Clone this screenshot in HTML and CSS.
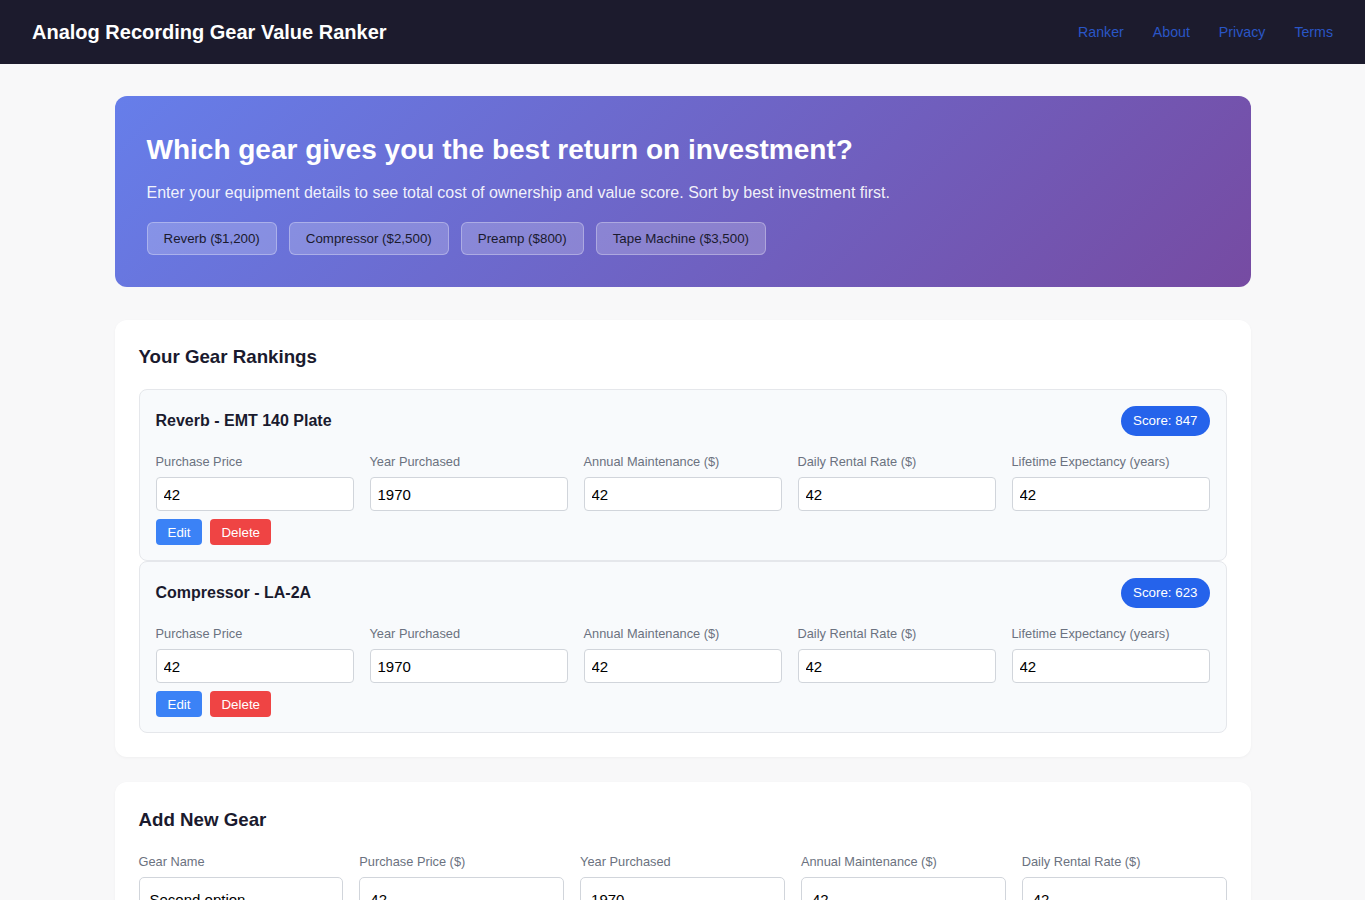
FILE: index.html
```html
<!DOCTYPE html>
<html lang="en">
<head>
    <meta charset="UTF-8">
    <title>Analog Recording Gear Value Ranker</title>
    <link rel="stylesheet" href="styles.css">
</head>
<body>
<header class="topbar">
    <h1 class="brand">Analog Recording Gear Value Ranker</h1>
    <nav class="nav">
        <a href="#">Ranker</a>
        <a href="#">About</a>
        <a href="#">Privacy</a>
        <a href="#">Terms</a>
    </nav>
</header>

<main class="container">
    <!-- hero -->
    <section class="hero">
        <h2>Which gear gives you the best return on investment?</h2>
        <p>Enter your equipment details to see total cost of ownership and value score. Sort by best investment first.</p>
        <div class="presets">
            <button class="preset">Reverb ($1,200)</button>
            <button class="preset">Compressor ($2,500)</button>
            <button class="preset">Preamp ($800)</button>
            <button class="preset">Tape Machine ($3,500)</button>
        </div>
    </section>

    <!-- rankings -->
    <section class="card">
        <h3>Your Gear Rankings</h3>
        <div class="item">
            <div class="item-head">
                <h4>Reverb - EMT 140 Plate</h4>
                <span class="score">Score: 847</span>
            </div>
            <div class="fields">
                <label class="field"><span>Purchase Price</span><input type="text" value="42"></label>
                <label class="field"><span>Year Purchased</span><input type="text" value="1970"></label>
                <label class="field"><span>Annual Maintenance ($)</span><input type="text" value="42"></label>
                <label class="field"><span>Daily Rental Rate ($)</span><input type="text" value="42"></label>
                <label class="field"><span>Lifetime Expectancy (years)</span><input type="text" value="42"></label>
            </div>
            <div class="actions">
                <button class="btn btn-edit">Edit</button>
                <button class="btn btn-delete">Delete</button>
            </div>
        </div>
        <div class="item">
            <div class="item-head">
                <h4>Compressor - LA-2A</h4>
                <span class="score">Score: 623</span>
            </div>
            <div class="fields">
                <label class="field"><span>Purchase Price</span><input type="text" value="42"></label>
                <label class="field"><span>Year Purchased</span><input type="text" value="1970"></label>
                <label class="field"><span>Annual Maintenance ($)</span><input type="text" value="42"></label>
                <label class="field"><span>Daily Rental Rate ($)</span><input type="text" value="42"></label>
                <label class="field"><span>Lifetime Expectancy (years)</span><input type="text" value="42"></label>
            </div>
            <div class="actions">
                <button class="btn btn-edit">Edit</button>
                <button class="btn btn-delete">Delete</button>
            </div>
        </div>
    </section>

    <!-- add form -->
    <section class="card card-add">
        <h3>Add New Gear</h3>
        <div class="fields add">
            <label class="field"><span>Gear Name</span><input type="text" value="Second option"></label>
            <label class="field"><span>Purchase Price ($)</span><input type="text" value="42"></label>
            <label class="field"><span>Year Purchased</span><input type="text" value="1970"></label>
            <label class="field"><span>Annual Maintenance ($)</span><input type="text" value="42"></label>
            <label class="field"><span>Daily Rental Rate ($)</span><input type="text" value="42"></label>
        </div>
    </section>
</main>
</body>
</html>
```

FILE: styles.css
```css
* {
    box-sizing: border-box;
}
body {
    margin: 0;
    background: #f8f8f9;
    font-family: "Liberation Sans", Arial, sans-serif;
    color: #1a1a2e;
}

/* top bar */
.topbar {
    height: 64px;
    background: #1c1b2d;
    display: flex;
    align-items: center;
    justify-content: space-between;
    padding: 0 32px;
}
.brand {
    margin: 0;
    font-size: 20px;
    font-weight: bold;
    color: #fff;
}
.nav {
    display: flex;
    gap: 29px;
    margin-top: -1px;
}
.nav a {
    color: #2a56c6;
    text-decoration: none;
    font-size: 14.2px;
}

.container {
    max-width: 1200px;
    margin: 0 auto;
    padding: 32px 32px;
}

/* hero */
.hero {
    background: linear-gradient(135deg, #667eea 0%, #764ba2 100%);
    border-radius: 12px;
    padding: 32px 32px 32px;
    color: #fff;
    margin-bottom: 33px;
}
.hero h2 {
    margin: 4px 0 0;
    font-size: 28px;
    line-height: 36px;
    font-weight: bold;
}
.hero p {
    margin: 14px 0 18px;
    font-size: 16px;
    line-height: 22px;
    color: rgba(255, 255, 255, 0.92);
}
.presets {
    display: flex;
    gap: 12px;
}
.preset {
    height: 33px;
    padding: 0 16px;
    font-family: inherit;
    font-size: 13.333px;
    color: #1a1a2e;
    background: rgba(255, 255, 255, 0.2);
    border: 1px solid rgba(255, 255, 255, 0.3);
    border-radius: 6px;
}

/* cards */
.card {
    background: #fff;
    border-radius: 12px;
    padding: 24px 24px 24px;
    box-shadow: 0 1px 3px rgba(0, 0, 0, 0.04);
    margin-bottom: 25px;
}
.card h3 {
    margin: 1px 0 20px;
    font-size: 18.72px;
    line-height: 24px;
    font-weight: bold;
}
.card-add h3 {
    margin: 2px 0 21px;
}

.item {
    background: #f8fafc;
    border: 1px solid #e5e7eb;
    border-radius: 8px;
    padding: 16px 16px 15px;
}
.item-head {
    display: flex;
    justify-content: space-between;
    align-items: center;
    margin-bottom: 17px;
}
.item-head h4 {
    margin: 0;
    font-size: 16px;
    font-weight: bold;
}
.score {
    background: #2563eb;
    color: #fff;
    font-size: 13.333px;
    line-height: 18px;
    padding: 6px 12px;
    border-radius: 15px;
}

.fields {
    display: grid;
    grid-template-columns: repeat(5, 1fr);
    gap: 16px;
}
.field {
    display: flex;
    flex-direction: column;
}
.field span {
    font-size: 12.8px;
    line-height: 18px;
    color: #6b7280;
    margin-bottom: 6px;
}
.field input {
    width: 100%;
    height: 34px;
    border: 1px solid #d1d5db;
    border-radius: 4px;
    padding: 0 7px;
    font-family: inherit;
    font-size: 15px;
    color: #000;
    background: #fff;
}
.add .field input {
    height: 44px;
    padding: 0 10px;
    border-radius: 5px;
}

.actions {
    display: flex;
    gap: 8px;
    margin-top: 8px;
}
.btn {
    height: 26px;
    padding: 0 12px;
    border: none;
    border-radius: 4px;
    font-family: inherit;
    font-size: 13.333px;
    color: #fff;
}
.btn-edit {
    background: #3b82f6;
}
.btn-delete {
    background: #ef4444;
    padding: 0 11px;
}
```
